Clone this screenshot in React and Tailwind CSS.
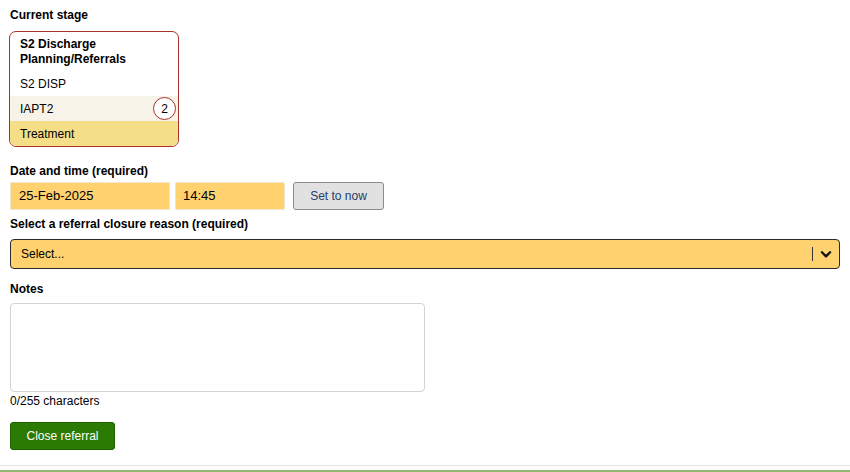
import React from "react";

const stages = [
  { id: "s2dpr", name: "S2 Discharge Planning/Referrals", kind: "header" },
  { id: "s2disp", name: "S2 DISP" },
  { id: "iapt2", name: "IAPT2", kind: "current", count: 2 },
  { id: "treat", name: "Treatment", kind: "selected" },
];

function StageList() {
  return (
    <div className="w-[170px] rounded-[7px] border border-[#a8322a] overflow-hidden">
      {stages.map((s) => {
        if (s.kind === "header") {
          return (
            <div key={s.id} className="px-[10px] pt-[5px] pb-[4px] text-[12px] leading-[15px] font-bold text-black">
              {s.name}
            </div>
          );
        }
        const bg =
          s.kind === "current" ? "bg-[#f7f3e8]" : s.kind === "selected" ? "bg-[#f4de87]" : "bg-white";
        return (
          <div key={s.id} className={`h-[25px] flex items-center justify-between pl-[10px] pr-[2px] text-[12px] ${bg}`}>
            <span>{s.name}</span>
            {s.count ? (
              <span className="w-[23px] h-[23px] rounded-full border border-[#a8322a] bg-white flex items-center justify-center text-[12px]">
                {s.count}
              </span>
            ) : null}
          </div>
        );
      })}
    </div>
  );
}

export default function App() {
  return (
    <div className="w-[850px] h-[472px] bg-white flex flex-col text-black" style={{ fontFamily: '"Liberation Sans", Arial, sans-serif' }}>
      <div className="flex-1 px-[10px] pt-[8px]">
        <div className="text-[12px] font-bold leading-[15px]">Current stage</div>
        <div className="mt-[8px] -ml-px">
          <StageList />
        </div>

        <div className="mt-[17px] text-[12px] font-bold leading-[15px]">Date and time (required)</div>
        <div className="mt-[3px] flex items-center">
          <div className="w-[160px] h-[28px] bg-[#ffd16f] border border-[#f0e6d0] flex items-center px-[8px] text-[13px]">
            25-Feb-2025
          </div>
          <div className="ml-[5px] w-[110px] h-[28px] bg-[#ffd16f] border border-[#f0e6d0] rounded-[2px] flex items-center px-[7px] text-[13px]">
            14:45
          </div>
          <button className="ml-[8px] w-[91px] h-[28px] bg-[#e1e1e1] border border-[#8a8a8a] rounded-[3px] text-[12px] text-[#24406a]">
            Set to now
          </button>
        </div>

        <div className="mt-[7px] text-[12px] font-bold leading-[15px]">Select a referral closure reason (required)</div>
        <div className="mt-[7px] h-[30px] bg-[#ffd16f] border border-[#2b2b2b] rounded-[4px] flex items-center pl-[10px] pr-[6px] text-[12px]">
          <span className="flex-1">Select...</span>
          <span className="w-px h-[14px] bg-[#333]" />
          <svg className="ml-[6px]" width="14" height="14" viewBox="0 0 24 24" fill="none" stroke="#111" strokeWidth="4" strokeLinecap="round" strokeLinejoin="round">
            <path d="M5 9l7 7 7-7" />
          </svg>
        </div>

        <div className="mt-[13px] text-[12px] font-bold leading-[15px]">Notes</div>
        <textarea className="mt-[6px] block w-[415px] h-[89px] border border-[#d4d4d4] rounded-[4px] resize-none outline-none" />
        <div className="mt-[2px] text-[12px] leading-[15px]">0/255 characters</div>
        <button className="mt-[13px] w-[105px] h-[28px] bg-[#2a7a03] border border-[#1f6200] rounded-[3px] text-white text-[12px]">
          Close referral
        </button>
      </div>
      <div className="h-px bg-[#e4e4e4]" />
      <div className="h-[4px] bg-white" />
      <div className="h-[2px] bg-[#93b874]" />
    </div>
  );
}
